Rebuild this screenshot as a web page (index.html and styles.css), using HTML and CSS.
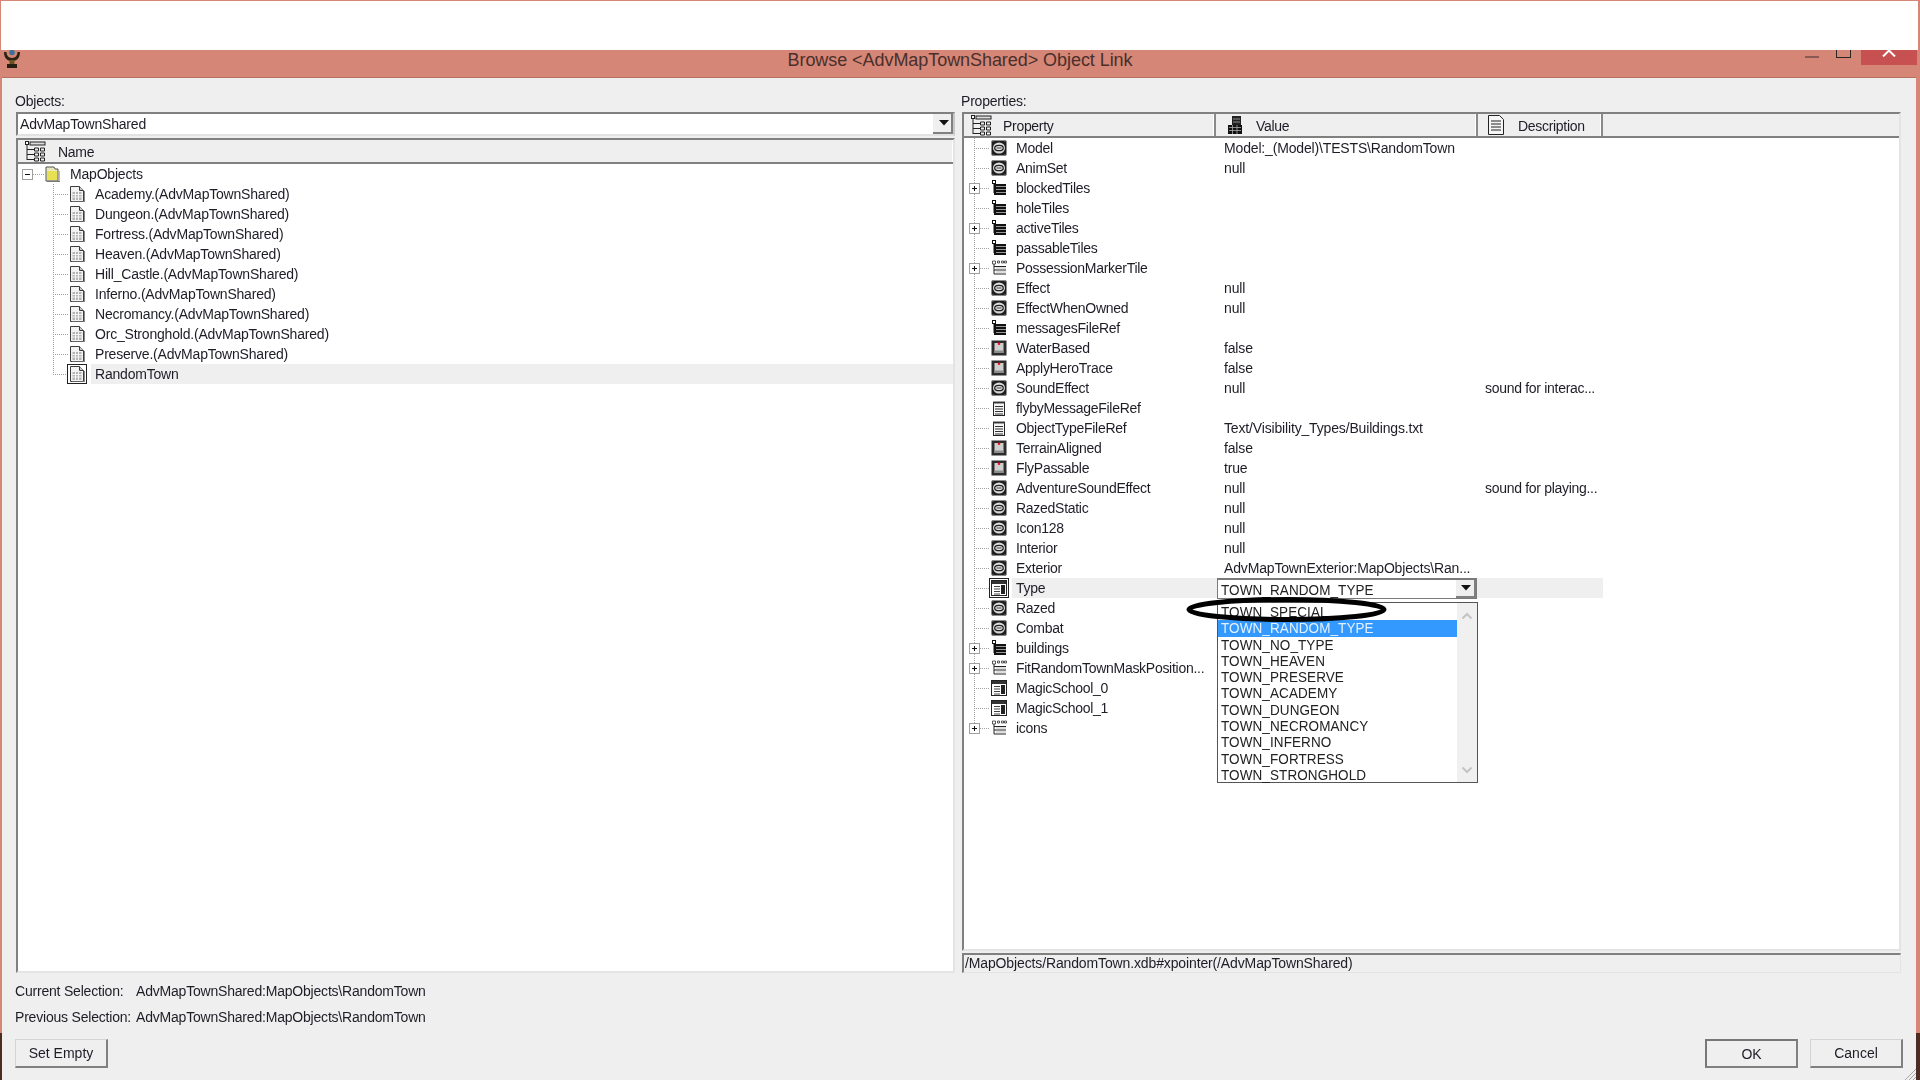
FILE: index.html
```html
<!DOCTYPE html>
<html lang="en">
<head>
<meta charset="utf-8">
<title>Browse Object Link</title>
<link rel="stylesheet" href="styles.css">
</head>
<body>
<svg class="defs" aria-hidden="true">
  <symbol id="i-link" viewBox="0 0 16 16">
    <rect x="0.5" y="0.5" width="15" height="15" rx="1" fill="#1f1f1f"/>
    <ellipse cx="8" cy="8" rx="6" ry="5.600" fill="#dcdcdc"/>
    <ellipse cx="8" cy="8" rx="4.300" ry="2.700" fill="#e8e8e8" stroke="#1f1f1f" stroke-width="1.300"/>
    <path d="M5.500 8h5" stroke="#555" stroke-width="1.200"/>
    <path d="M1 1h2M13 1h2M1 15h2M13 15h2" stroke="#777"/>
  </symbol>
  <symbol id="i-list" viewBox="0 0 16 16">
    <rect x="1.5" y="0.5" width="3" height="3" fill="#fff" stroke="#111"/>
    <path d="M3 3.500V13" stroke="#111"/>
    <rect x="3" y="4" width="12" height="11" fill="#111"/>
    <path d="M5 6.500h10M5 9.500h10M5 12.500h10" stroke="#999"/>
  </symbol>
  <symbol id="i-struct" viewBox="0 0 16 16">
    <path d="M1.500 1h3v3h-3zM6.500 1h2v2h-2zM10.500 1h2v2h-2zM13.500 1h2v2h-2z" fill="#fff" stroke="#333" stroke-width=".8"/>
    <path d="M3 4v10M3 6.500h12M3 10h12M3 14h12" stroke="#222" fill="none"/>
    <path d="M5 8h10M5 12h10" stroke="#bbb"/>
  </symbol>
  <symbol id="i-bool" viewBox="0 0 16 16">
    <rect x="0.500" y="0.500" width="15" height="15" fill="#2c2c2c"/>
    <rect x="3.500" y="3" width="9" height="10" fill="#cfcfcf"/>
    <rect x="3.500" y="10.500" width="9" height="2.500" fill="#8f8f8f"/>
    <circle cx="8" cy="3.800" r="1.300" fill="#f00f1a"/>
  </symbol>
  <symbol id="i-text" viewBox="0 0 16 16">
    <rect x="2.500" y="2.500" width="11" height="13" fill="#f4f4f4" stroke="#222"/>
    <path d="M3 1v3M5 1v3M7 1v3M9 1v3M11 1v3M13 1v3" stroke="#444"/>
    <path d="M4 6.500h8M4 9h8M4 11.500h8M4 14h8" stroke="#333"/>
  </symbol>
  <symbol id="i-enum" viewBox="0 0 16 16">
    <rect x="0.500" y="0.500" width="15" height="15" fill="#fff" stroke="#222"/>
    <rect x="1" y="1" width="14" height="3" fill="#333"/>
    <path d="M3 6.500h6M3 9h6M3 11.500h6M3 14h6" stroke="#444"/>
    <rect x="10" y="5" width="4" height="9" fill="#222"/>
  </symbol>
  <symbol id="i-doc" viewBox="0 0 16 16">
    <path d="M1.500 .5h9l4 4v11h-13z" fill="#f2f2f2" stroke="#3c3c3c"/>
    <path d="M10.500 .5v4h4" fill="#ccc" stroke="#3c3c3c"/>
    <path d="M3.500 6h9v8h-9z" fill="#b4b4b4"/>
    <path d="M3.500 8.500h9M3.500 11h9M6.500 6v8M9.500 6v8" stroke="#f4f4f4"/>
    <path d="M15.500 5v11H3" fill="none" stroke="#888"/>
  </symbol>
  <symbol id="i-folder" viewBox="0 0 16 16">
    <path d="M2 1h8l1 2h3v12H2z" fill="#e9e6c0" stroke="#555"/>
    <rect x="3" y="5" width="10" height="9" fill="#e6e052"/>
    <path d="M3 15.500h13V5" fill="none" stroke="#777"/>
  </symbol>
  <symbol id="i-tree" viewBox="0 0 22 22">
    <rect x="1.500" y="1.500" width="3" height="3" fill="#fff" stroke="#222"/>
    <rect x="6" y="2" width="15" height="3" fill="#ddd" stroke="#222"/>
    <path d="M3 5v15M3 9.500h7M3 14.500h7M3 19.500h7" stroke="#222" fill="none"/>
    <path d="M10.500 8h4v3h-4zM16.500 8h4v3h-4zM10.500 13h4v3h-4zM16.500 13h4v3h-4zM10.500 18h4v3h-4zM16.500 18h4v3h-4z" fill="#eee" stroke="#222"/>
  </symbol>
  <symbol id="i-value" viewBox="0 0 16 20">
    <rect x="5" y="1" width="9" height="18" fill="#222"/>
    <rect x="1" y="10" width="14" height="9" fill="#111"/>
    <path d="M6 4h7M6 7h7M2 12.500h12M2 15.500h12M5.500 10v9M10 10v9" stroke="#aaa" stroke-width=".8"/>
  </symbol>
  <symbol id="i-desc" viewBox="0 0 16 20">
    <path d="M.5 .5h11l4 4v15H.5z" fill="#f6f6f6" stroke="#222"/>
    <path d="M3 6h10M3 9h10M3 12h10M3 15h10" stroke="#222"/>
  </symbol>
  <symbol id="i-plus" viewBox="0 0 11 11">
    <rect x="0.500" y="0.500" width="10" height="10" fill="#fff" stroke="#a0a0a0"/>
    <path d="M3 5.500h5M5.500 3v5" stroke="#111"/>
  </symbol>
  <symbol id="i-minus" viewBox="0 0 11 11">
    <rect x="0.500" y="0.500" width="10" height="10" fill="#fff" stroke="#a0a0a0"/>
    <path d="M3 5.500h5" stroke="#111"/>
  </symbol>
  <symbol id="i-arrow" viewBox="0 0 10 6">
    <path d="M0 0h10L5 5.500z" fill="#111"/>
  </symbol>
  <symbol id="i-cup" viewBox="0 0 16 18">
    <circle cx="8" cy="2.500" r="2.800" fill="#3d6f99"/>
    <path d="M0 2c0 6 3 9 8 9s8-3 8-9h-2.500c0 3-2 6-5.500 6S2.500 5 2.500 2z" fill="#2b2414"/>
    <path d="M5.500 10h5v4h-5z" fill="#6a5320"/>
    <path d="M3 14h10v4H3z" fill="#241f12"/>
  </symbol>
</svg>

<div class="blank"></div>

<header class="titlebar">
  <svg class="cup"><use href="#i-cup"/></svg>
  <h1 class="title">Browse &lt;AdvMapTownShared&gt; Object Link</h1>
  <div class="winctl">
    <span class="min"></span>
    <span class="max"></span>
    <span class="close"><svg width="18" height="7" viewBox="0 0 18 7"><path d="M3 6.500 9 0.500l6 6" fill="none" stroke="#fff" stroke-width="2"/></svg></span>
  </div>
</header>

<main class="client">
  <div class="panes">
    <section class="pane">
      <div class="label left-label">Objects:</div>
      <div class="combo">
        <span class="combo-text">AdvMapTownShared</span>
        <span class="combo-btn"><svg class="arrow"><use href="#i-arrow"/></svg></span>
      </div>
      <div class="box tree">
        <div class="head">
          <div class="hcell hcell-name">
            <svg class="hicon-wide"><use href="#i-tree"/></svg><span>Name</span>
          </div>
        </div>
        <div class="tree-row root"><svg class="box-ctl"><use href="#i-minus"/></svg><span class="dash"></span><svg class="ico"><use href="#i-folder"/></svg><span class="tname">MapObjects</span></div>
        <div class="tree-row"><span class="conn"></span><svg class="ico"><use href="#i-doc"/></svg><span class="tname">Academy.(AdvMapTownShared)</span></div>
        <div class="tree-row"><span class="conn"></span><svg class="ico"><use href="#i-doc"/></svg><span class="tname">Dungeon.(AdvMapTownShared)</span></div>
        <div class="tree-row"><span class="conn"></span><svg class="ico"><use href="#i-doc"/></svg><span class="tname">Fortress.(AdvMapTownShared)</span></div>
        <div class="tree-row"><span class="conn"></span><svg class="ico"><use href="#i-doc"/></svg><span class="tname">Heaven.(AdvMapTownShared)</span></div>
        <div class="tree-row"><span class="conn"></span><svg class="ico"><use href="#i-doc"/></svg><span class="tname">Hill_Castle.(AdvMapTownShared)</span></div>
        <div class="tree-row"><span class="conn"></span><svg class="ico"><use href="#i-doc"/></svg><span class="tname">Inferno.(AdvMapTownShared)</span></div>
        <div class="tree-row"><span class="conn"></span><svg class="ico"><use href="#i-doc"/></svg><span class="tname">Necromancy.(AdvMapTownShared)</span></div>
        <div class="tree-row"><span class="conn"></span><svg class="ico"><use href="#i-doc"/></svg><span class="tname">Orc_Stronghold.(AdvMapTownShared)</span></div>
        <div class="tree-row"><span class="conn"></span><svg class="ico"><use href="#i-doc"/></svg><span class="tname">Preserve.(AdvMapTownShared)</span></div>
        <div class="tree-row sel"><span class="conn last"></span><span class="ico-frame"><svg class="ico"><use href="#i-doc"/></svg></span><span class="tname">RandomTown</span></div>
      </div>
    </section>

    <section class="pane">
      <div class="label right-label">Properties:</div>
      <div class="box props">
        <div class="head">
          <div class="hcell hcell-prop"><svg class="hicon-wide"><use href="#i-tree"/></svg><span>Property</span></div>
          <div class="hcell hcell-val"><svg class="hicon"><use href="#i-value"/></svg><span>Value</span></div>
          <div class="hcell hcell-desc"><svg class="hicon"><use href="#i-desc"/></svg><span>Description</span></div>
        </div>
        <div class="plist">
          <div class="prow"><span class="tw"></span><svg class="ico"><use href="#i-link"/></svg><span class="pname">Model</span><span class="pval">Model:_(Model)\TESTS\RandomTown</span><span class="pdesc"></span></div>
          <div class="prow"><span class="tw"></span><svg class="ico"><use href="#i-link"/></svg><span class="pname">AnimSet</span><span class="pval">null</span><span class="pdesc"></span></div>
          <div class="prow"><span class="tw"><svg class="box-ctl"><use href="#i-plus"/></svg></span><svg class="ico"><use href="#i-list"/></svg><span class="pname">blockedTiles</span><span class="pval"></span><span class="pdesc"></span></div>
          <div class="prow"><span class="tw"></span><svg class="ico"><use href="#i-list"/></svg><span class="pname">holeTiles</span><span class="pval"></span><span class="pdesc"></span></div>
          <div class="prow"><span class="tw"><svg class="box-ctl"><use href="#i-plus"/></svg></span><svg class="ico"><use href="#i-list"/></svg><span class="pname">activeTiles</span><span class="pval"></span><span class="pdesc"></span></div>
          <div class="prow"><span class="tw"></span><svg class="ico"><use href="#i-list"/></svg><span class="pname">passableTiles</span><span class="pval"></span><span class="pdesc"></span></div>
          <div class="prow"><span class="tw"><svg class="box-ctl"><use href="#i-plus"/></svg></span><svg class="ico"><use href="#i-struct"/></svg><span class="pname">PossessionMarkerTile</span><span class="pval"></span><span class="pdesc"></span></div>
          <div class="prow"><span class="tw"></span><svg class="ico"><use href="#i-link"/></svg><span class="pname">Effect</span><span class="pval">null</span><span class="pdesc"></span></div>
          <div class="prow"><span class="tw"></span><svg class="ico"><use href="#i-link"/></svg><span class="pname">EffectWhenOwned</span><span class="pval">null</span><span class="pdesc"></span></div>
          <div class="prow"><span class="tw"></span><svg class="ico"><use href="#i-list"/></svg><span class="pname">messagesFileRef</span><span class="pval"></span><span class="pdesc"></span></div>
          <div class="prow"><span class="tw"></span><svg class="ico"><use href="#i-bool"/></svg><span class="pname">WaterBased</span><span class="pval">false</span><span class="pdesc"></span></div>
          <div class="prow"><span class="tw"></span><svg class="ico"><use href="#i-bool"/></svg><span class="pname">ApplyHeroTrace</span><span class="pval">false</span><span class="pdesc"></span></div>
          <div class="prow"><span class="tw"></span><svg class="ico"><use href="#i-link"/></svg><span class="pname">SoundEffect</span><span class="pval">null</span><span class="pdesc">sound for interac...</span></div>
          <div class="prow"><span class="tw"></span><svg class="ico"><use href="#i-text"/></svg><span class="pname">flybyMessageFileRef</span><span class="pval"></span><span class="pdesc"></span></div>
          <div class="prow"><span class="tw"></span><svg class="ico"><use href="#i-text"/></svg><span class="pname">ObjectTypeFileRef</span><span class="pval">Text/Visibility_Types/Buildings.txt</span><span class="pdesc"></span></div>
          <div class="prow"><span class="tw"></span><svg class="ico"><use href="#i-bool"/></svg><span class="pname">TerrainAligned</span><span class="pval">false</span><span class="pdesc"></span></div>
          <div class="prow"><span class="tw"></span><svg class="ico"><use href="#i-bool"/></svg><span class="pname">FlyPassable</span><span class="pval">true</span><span class="pdesc"></span></div>
          <div class="prow"><span class="tw"></span><svg class="ico"><use href="#i-link"/></svg><span class="pname">AdventureSoundEffect</span><span class="pval">null</span><span class="pdesc">sound for playing...</span></div>
          <div class="prow"><span class="tw"></span><svg class="ico"><use href="#i-link"/></svg><span class="pname">RazedStatic</span><span class="pval">null</span><span class="pdesc"></span></div>
          <div class="prow"><span class="tw"></span><svg class="ico"><use href="#i-link"/></svg><span class="pname">Icon128</span><span class="pval">null</span><span class="pdesc"></span></div>
          <div class="prow"><span class="tw"></span><svg class="ico"><use href="#i-link"/></svg><span class="pname">Interior</span><span class="pval">null</span><span class="pdesc"></span></div>
          <div class="prow"><span class="tw"></span><svg class="ico"><use href="#i-link"/></svg><span class="pname">Exterior</span><span class="pval">AdvMapTownExterior:MapObjects\Ran...</span><span class="pdesc"></span></div>
          <div class="prow sel"><span class="tw"></span><span class="ico-frame"><svg class="ico"><use href="#i-enum"/></svg></span><span class="pname">Type</span><span class="pval"></span><span class="pdesc"></span></div>
          <div class="prow"><span class="tw"></span><svg class="ico"><use href="#i-link"/></svg><span class="pname">Razed</span><span class="pval"></span><span class="pdesc"></span></div>
          <div class="prow"><span class="tw"></span><svg class="ico"><use href="#i-link"/></svg><span class="pname">Combat</span><span class="pval"></span><span class="pdesc"></span></div>
          <div class="prow"><span class="tw"><svg class="box-ctl"><use href="#i-plus"/></svg></span><svg class="ico"><use href="#i-list"/></svg><span class="pname">buildings</span><span class="pval"></span><span class="pdesc"></span></div>
          <div class="prow"><span class="tw"><svg class="box-ctl"><use href="#i-plus"/></svg></span><svg class="ico"><use href="#i-struct"/></svg><span class="pname">FitRandomTownMaskPosition...</span><span class="pval"></span><span class="pdesc"></span></div>
          <div class="prow"><span class="tw"></span><svg class="ico"><use href="#i-enum"/></svg><span class="pname">MagicSchool_0</span><span class="pval"></span><span class="pdesc"></span></div>
          <div class="prow"><span class="tw"></span><svg class="ico"><use href="#i-enum"/></svg><span class="pname">MagicSchool_1</span><span class="pval"></span><span class="pdesc"></span></div>
          <div class="prow last"><span class="tw"><svg class="box-ctl"><use href="#i-plus"/></svg></span><svg class="ico"><use href="#i-struct"/></svg><span class="pname">icons</span><span class="pval"></span><span class="pdesc"></span></div>

          <div class="dd-combo">
            <span class="dd-t">TOWN_RANDOM_TYPE</span>
            <span class="dd-btn"><svg class="arrow"><use href="#i-arrow"/></svg></span>
          </div>
          <div class="dd-list">
            <div class="dd-items">
              <div class="dd-item"><span class="dd-t">TOWN_SPECIAL</span></div>
              <div class="dd-item on"><span class="dd-t">TOWN_RANDOM_TYPE</span></div>
              <div class="dd-item"><span class="dd-t">TOWN_NO_TYPE</span></div>
              <div class="dd-item"><span class="dd-t">TOWN_HEAVEN</span></div>
              <div class="dd-item"><span class="dd-t">TOWN_PRESERVE</span></div>
              <div class="dd-item"><span class="dd-t">TOWN_ACADEMY</span></div>
              <div class="dd-item"><span class="dd-t">TOWN_DUNGEON</span></div>
              <div class="dd-item"><span class="dd-t">TOWN_NECROMANCY</span></div>
              <div class="dd-item"><span class="dd-t">TOWN_INFERNO</span></div>
              <div class="dd-item"><span class="dd-t">TOWN_FORTRESS</span></div>
              <div class="dd-item"><span class="dd-t">TOWN_STRONGHOLD</span></div>
            </div>
            <div class="dd-scroll">
              <svg width="12" height="8" viewBox="0 0 12 8"><path d="M1.500 6.500 6 2l4.500 4.500" fill="none" stroke="#c4c4c4" stroke-width="2"/></svg>
              <svg width="12" height="8" viewBox="0 0 12 8"><path d="M1.500 1.500 6 6l4.500-4.500" fill="none" stroke="#c4c4c4" stroke-width="2"/></svg>
            </div>
          </div>
          <svg class="ring" viewBox="0 0 201 25"><ellipse cx="100.500" cy="12.500" rx="97.500" ry="10" fill="none" stroke="#000" stroke-width="5"/></svg>
        </div>
      </div>
      <div class="pathbar">/MapObjects/RandomTown.xdb#xpointer(/AdvMapTownShared)</div>
    </section>
  </div>

  <div class="info">
    <div class="info-row"><span class="info-key">Current Selection:</span><span>AdvMapTownShared:MapObjects\RandomTown</span></div>
    <div class="info-row"><span class="info-key">Previous Selection:</span><span>AdvMapTownShared:MapObjects\RandomTown</span></div>
  </div>

  <footer class="footer">
    <button class="btn">Set Empty</button>
    <button class="btn btn-ok">OK</button>
    <button class="btn">Cancel</button>
  </footer>
  <svg class="grip" width="12" height="12" viewBox="0 0 12 12"><path d="M12 1 1 12M12 5l-7 7M12 9l-3 3" stroke="#a8a8a8"/></svg>
</main>
</body>
</html>
```
FILE: styles.css
```css
* { box-sizing: border-box; }
html, body { margin: 0; height: 100%; }
body {
  width: 1920px;
  height: 1080px;
  overflow: hidden;
  background: linear-gradient(#d58677 1033px, #4d2c24 1033px);
  font-family: "Liberation Sans", Arial, sans-serif;
  font-size: 14px;
  letter-spacing: -.2px;
  color: #1d1d26;
  display: flex;
  flex-direction: column;
}
.defs { position: absolute; width: 0; height: 0; }

.blank {
  height: 49px;
  margin: 1px 2px 0 1px;
  background: #fff;
  flex: none;
}

.titlebar {
  flex: none;
  height: 27px;
  background: #d58677;
  display: grid;
  grid-template-columns: 1fr auto 1fr;
  align-items: start;
}
.cup { width: 16px; height: 18px; margin-left: 4px; display: block; }
.title {
  margin: 0;
  font-size: 18px;
  font-weight: 400;
  line-height: 19px;
  letter-spacing: -.06px;
  color: #4a2f2a;
  padding-top: 1px;
}
.winctl { justify-self: end; display: flex; align-items: flex-start; margin-right: 3px; }
.min { width: 14px; height: 2px; background: #8a5a52; margin-top: 6px; margin-right: 17px; }
.max { width: 15px; height: 8px; border: 1px solid #2a2422; border-top: 0; margin-right: 10px; }
.close {
  width: 56px; height: 15px; background: #c75050;
  display: flex; justify-content: center; align-items: flex-start;
}

.client {
  flex: 1;
  margin: 0 4px 0 2px;
  background: #efefef;
  border-top: 1px solid #b66e60;
  padding: 14px 13px 0 13px;
  display: flex;
  flex-direction: column;
  position: relative;
  filter: blur(.35px);
}
.panes {
  flex: none;
  height: 881px;
  margin: 0 2px 0 1px;
  display: grid;
  grid-template-columns: 939px 939px;
  column-gap: 7px;
}
.pane { display: flex; flex-direction: column; min-height: 0; }
.label { flex: none; line-height: 18px; }
.left-label { height: 20px; margin-left: -1px; }
.right-label { height: 20px; margin-left: -1px; }

.combo {
  flex: none; height: 24px; display: flex; align-items: center; justify-content: space-between;
  background: #fff;
  border-top: 2px solid #808080; border-left: 2px solid #808080;
  border-right: 2px solid #c8c8c8; border-bottom: 2px solid #e2e2e2;
  padding-left: 2px;
  margin-bottom: 2px;
}
.combo-btn {
  width: 20px; height: 20px; background: #efefef;
  border-right: 2px solid #808080; border-bottom: 2px solid #808080;
  display: flex; align-items: center; justify-content: center;
  padding-left: 3px;
}
.arrow { width: 10px; height: 6px; display: block; }

.box {
  flex: 1; min-height: 0; background: #fff;
  border-top: 2px solid #808080; border-left: 2px solid #808080;
  border-right: 2px solid #e4e4e4; border-bottom: 2px solid #e4e4e4;
  display: flex; flex-direction: column;
}
.head {
  flex: none; height: 24px; display: flex;
  background: #efefef;
  border-bottom: 2px solid #808080;
  letter-spacing: -.3px;
}
.hcell { display: flex; align-items: center; height: 100%; border-right: 2px solid #8a8a8a; box-shadow: inset -1px 0 0 #fff; }
.hcell span { padding-top: 1px; }
.hcell-name { width: 100%; border-right: 0; padding-left: 6px; gap: 12px; }
.hcell-prop { width: 252px; padding-left: 6px; gap: 11px; }
.hcell-val { width: 262px; padding-left: 11px; gap: 13px; }
.hcell-desc { width: 125px; padding-left: 10px; gap: 14px; }
.hicon-wide { width: 22px; height: 22px; display: block; }
.hicon { width: 16px; height: 20px; display: block; }

.tree-row { height: 20px; display: flex; align-items: center; white-space: nowrap; flex: none; }
.root { padding-left: 4px; }
.dash { width: 11px; height: 1px; background: repeating-linear-gradient(90deg, #a0a0a0 0 1px, transparent 1px 2px); }
.tree .tree-row .ico + .tname { margin-left: 10px; }
.tree-row:not(.root) { padding-left: 35px; }
.conn {
  width: 16px; height: 20px; flex: none;
  background:
    repeating-linear-gradient(180deg, #a0a0a0 0 1px, transparent 1px 2px) left top / 1px 100% no-repeat,
    repeating-linear-gradient(90deg, #a0a0a0 0 1px, transparent 1px 2px) left center / 100% 1px no-repeat;
}
.conn.last {
  background:
    repeating-linear-gradient(180deg, #a0a0a0 0 1px, transparent 1px 2px) left top / 1px 50% no-repeat,
    repeating-linear-gradient(90deg, #a0a0a0 0 1px, transparent 1px 2px) left center / 100% 1px no-repeat;
}
.ico { width: 16px; height: 16px; display: block; flex: none; }
.box-ctl { width: 11px; height: 11px; display: block; flex: none; }
.tree-row.sel .tname { margin-left: 4px; background: #efefef; flex: 1; height: 20px; line-height: 20px; padding-left: 4px; }
.ico-frame {
  width: 20px; height: 20px; flex: none;
  border: 1px solid #222;
  display: flex; align-items: center; justify-content: center;
}
.tree-row.sel .ico-frame { margin-left: -2px; }
.props .ico-frame { margin: 0 -2px; }

.plist { flex: 1; position: relative; min-height: 0; }
.prow {
  height: 20px;
  display: grid;
  grid-template-columns: 27px 16px 217px 261px 118px;
  align-items: center;
  white-space: nowrap;
  line-height: 20px;
}
.tw {
  height: 20px; display: flex; align-items: center; padding-left: 5px;
  background:
    repeating-linear-gradient(180deg, #a0a0a0 0 1px, transparent 1px 2px) 10px top / 1px 100% no-repeat,
    repeating-linear-gradient(90deg, #a0a0a0 0 1px, transparent 1px 2px) 10px center / 15px 1px no-repeat;
}
.prow.last .tw {
  background:
    repeating-linear-gradient(180deg, #a0a0a0 0 1px, transparent 1px 2px) 10px top / 1px 50% no-repeat,
    repeating-linear-gradient(90deg, #a0a0a0 0 1px, transparent 1px 2px) 10px center / 15px 1px no-repeat;
}
.pname { padding-left: 9px; height: 20px; letter-spacing: -.28px; }
.pval { height: 20px; letter-spacing: -.16px; }
.pdesc { height: 20px; letter-spacing: -.3px; }
.prow.sel .pname { margin-left: 5px; padding-left: 4px; }
.prow.sel .pname, .prow.sel .pval, .prow.sel .pdesc { background: #efefef; }

.dd-combo {
  position: absolute; left: 253px; top: 440px; width: 260px; height: 21px;
  background: #fff;
  border: 1px solid #7a7a7a; border-top-width: 2px;
  display: flex; align-items: center; justify-content: space-between;
  padding-left: 3px;
}
.dd-t {
  display: inline-block;
  font-size: 15px;
  letter-spacing: .1px;
  color: #222;
  transform: scaleX(.9);
  transform-origin: left center;
}
.dd-btn {
  width: 20px; height: 18px; background: #efefef;
  border-right: 2px solid #808080; border-bottom: 2px solid #808080;
  display: flex; align-items: center; justify-content: center;
  padding-left: 2px;
}
.dd-list {
  position: absolute; left: 253px; top: 464px; width: 261px; height: 181px;
  background: #fff; border: 1px solid #555;
  display: flex;
}
.dd-items { width: 239px; padding-top: 1px; }
.dd-item { height: 16.300px; line-height: 16px; padding-left: 3px; white-space: nowrap; }
.dd-item.on { background: #3399ff; }
.dd-item.on .dd-t { color: #e6f1ff; }
.dd-scroll {
  flex: 1; background: #f0f0f0;
  display: flex; flex-direction: column; justify-content: space-between; align-items: center;
  padding: 9px 0 8px;
}
.ring { position: absolute; left: 222px; top: 459px; width: 201px; height: 25px; }

.pathbar {
  flex: none; height: 20px; margin-top: 2px;
  background: #efefef;
  border-top: 2px solid #808080; border-left: 2px solid #808080;
  border-right: 1px solid #e4e4e4; border-bottom: 1px solid #e4e4e4;
  line-height: 16px; padding-left: 1px; white-space: nowrap;
  letter-spacing: -.13px;
}

.info { flex: none; padding-top: 5px; }
.info-row { height: 26px; line-height: 26px; display: flex; white-space: nowrap; }
.info-key { width: 121px; flex: none; }

.footer { flex: none; margin-top: 9px; display: flex; gap: 12px; }
.btn {
  width: 93px; height: 29px; padding: 0;
  font: inherit; color: inherit;
  letter-spacing: 0;
  background: #efefef;
  border: 0;
  border-top: 1px solid #d4d4d4; border-left: 1px solid #d4d4d4;
  border-right: 2px solid #808080; border-bottom: 2px solid #808080;
}
.btn-ok { margin-left: auto; border-top: 2px solid #777; border-left: 2px solid #777; }
.grip { position: absolute; right: 0; bottom: 0; }
```
